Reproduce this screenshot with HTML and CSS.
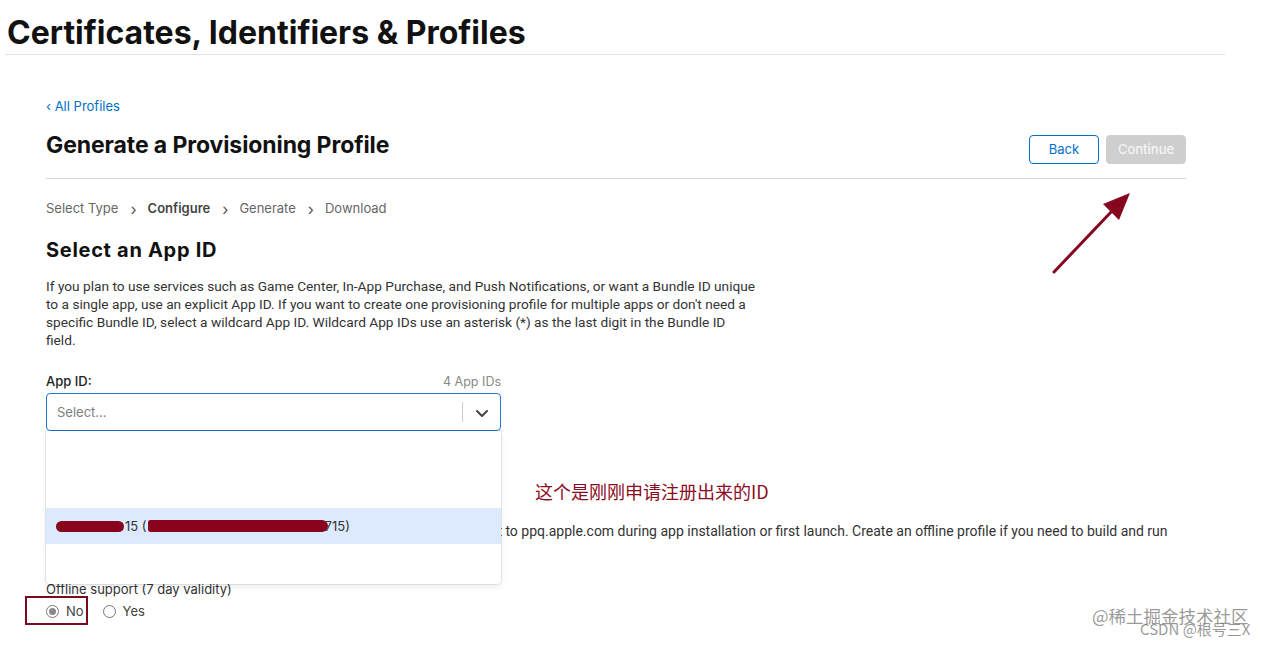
FILE: index.html
```html
<!DOCTYPE html>
<html lang="en">
<head>
<meta charset="utf-8">
<title>Generate a Provisioning Profile</title>
<link rel="stylesheet" href="styles.css">
</head>
<body>
<header class="site-header">
  <div class="site-title">Certificates, Identifiers &amp; Profiles</div>
</header>

<main class="main">
  <a class="back-link" href="#">&lsaquo; All Profiles</a>
  <div class="page-head">
    <h1 class="page-title">Generate a Provisioning Profile</h1>
    <div class="actions">
      <button class="btn btn-back">Back</button>
      <button class="btn btn-continue">Continue</button>
    </div>
  </div>

  <nav class="steps">
    <span class="step">Select Type</span>
    <span class="sep">&rsaquo;</span>
    <span class="step current">Configure</span>
    <span class="sep">&rsaquo;</span>
    <span class="step">Generate</span>
    <span class="sep">&rsaquo;</span>
    <span class="step">Download</span>
  </nav>

  <h2 class="section-title">Select an App ID</h2>
  <p class="desc">If you plan to use services such as Game Center, In-App Purchase, and Push Notifications, or want a Bundle ID unique to a single app, use an explicit App ID. If you want to create one provisioning profile for multiple apps or don't need a specific Bundle ID, select a wildcard App ID. Wildcard App IDs use an asterisk (*) as the last digit in the Bundle ID field.</p>

  <div class="field">
    <div class="field-head">
      <span class="field-label">App ID:</span>
      <span class="field-count">4 App IDs</span>
    </div>
    <div class="select">
      <span class="select-placeholder">Select...</span>
      <span class="select-divider"></span>
      <span class="select-arrow">
        <svg width="14" height="9" viewBox="0 0 14 9"><path d="M2 2 L7 7 L12 2" fill="none" stroke="#444" stroke-width="2" stroke-linecap="round" stroke-linejoin="round"/></svg>
      </span>
    </div>
    <div class="menu">
      <div class="menu-option active"><span class="redact r1"></span>15 (<span class="redact r2"></span>715)</div>
    </div>
  </div>

  <section class="offline">
    <h3 class="offline-title">Offline Support</h3>
    <p class="offline-text">If offline support is not selected, provisioning profiles will need to connect to ppq.apple.com during app installation or first launch. Create an offline profile if you need to build and run your app on devices without internet access.</p>
    <div class="offline-label">Offline support (7 day validity)</div>
    <div class="radios">
      <label class="radio marked"><span class="dot checked"></span>No</label>
      <label class="radio"><span class="dot"></span>Yes</label>
    </div>
  </section>
</main>

<div class="note">这个是刚刚申请注册出来的ID</div>
<svg class="arrow" width="90" height="90" viewBox="0 0 90 90">
  <path d="M6 84 L64 23" stroke="#86061f" stroke-width="3" stroke-linecap="round"/>
  <path d="M82 5 L55 16 L71 32 Z" fill="#86061f"/>
</svg>

<div class="watermark">
  <span class="wm1">@稀土掘金技术社区</span>
  <span class="wm2">CSDN @根号三X</span>
</div>
</body>
</html>
```
FILE: styles.css
```css
*, *::before, *::after { box-sizing: border-box; }

body {
  margin: 0;
  background: #fff;
  font-family: Inter, "Noto Sans CJK SC", sans-serif;
  color: #333;
  position: relative;
  width: 1271px;
  height: 647px;
  overflow: hidden;
}

.site-header {
  margin-left: 5px;
  width: 1220px;
  height: 55px;
  border-bottom: 1px solid #e2e2e2;
  padding: 13px 0 0 2px;
}

.site-title {
  font-size: 32px;
  font-weight: 700;
  letter-spacing: 0;
  color: #111;
  line-height: 40px;
}

.main {
  margin-left: 46px;
  width: 1140px;
  padding-top: 43px;
  position: relative;
}

.back-link {
  display: block;
  font-size: 13px;
  color: #0070c9;
  text-decoration: none;
  line-height: 16px;
}

.page-head {
  display: flex;
  justify-content: space-between;
  align-items: flex-start;
  border-bottom: 1px solid #d6d6d6;
  padding-top: 13px;
  height: 65px;
}

.page-title {
  margin: 3px 0 0;
  font-size: 23px;
  font-weight: 700;
  letter-spacing: -0.1px;
  color: #111;
  line-height: 30px;
}

.actions {
  display: flex;
  gap: 7px;
  margin-top: 8px;
}

.btn {
  height: 29px;
  border-radius: 4px;
  font-family: Inter, sans-serif;
  font-size: 13px;
  padding: 0 0 2px;
}

.btn-back {
  width: 70px;
  background: #fff;
  border: 1px solid #0070c9;
  color: #0070c9;
}

.btn-continue {
  width: 80px;
  background: #cfcfcf;
  border: 1px solid #cfcfcf;
  color: #f4f4f4;
  font-weight: 500;
}

.steps {
  display: flex;
  align-items: center;
  font-size: 13px;
  color: #666;
  margin-top: 19px;
  line-height: 16px;
}

.step.current { font-weight: 600; color: #444; }

.sep {
  font-size: 16px;
  color: #555;
  margin: 3px 11px 0 12px;
}

.section-title {
  margin: 19px 0 0;
  font-size: 20px;
  font-weight: 700;
  letter-spacing: 0.7px;
  color: #111;
  line-height: 28px;
}

.desc {
  margin: 13px 0 0;
  width: 711px;
  font-family: Roboto, sans-serif;
  font-size: 13.7px;
  line-height: 18px;
  color: #333;
}

.field {
  width: 455px;
  margin-top: 20px;
  position: relative;
}

.field-head {
  display: flex;
  justify-content: space-between;
  align-items: flex-end;
  height: 20px;
}

.field-label {
  font-size: 13px;
  font-weight: 500;
  color: #222;
  line-height: 16px;
}

.field-count {
  font-size: 12.5px;
  color: #888;
  line-height: 14px;
}

.select {
  margin-top: 4px;
  height: 38px;
  border: 1px solid #1f78d1;
  border-radius: 4px;
  display: flex;
  align-items: center;
  padding-left: 10px;
}

.select-placeholder {
  flex: 1;
  font-size: 13px;
  color: #808080;
}

.select-divider {
  width: 1px;
  height: 20px;
  background: #ccc;
}

.select-arrow {
  width: 37px;
  display: flex;
  justify-content: center;
  padding-top: 2px;
}

.menu {
  position: absolute;
  top: 62px;
  left: 0;
  width: 455px;
  height: 153px;
  background: #fff;
  border-radius: 0 0 4px 4px;
  box-shadow: 0 0 0 1px rgba(0,0,0,0.08), 0 3px 6px rgba(0,0,0,0.08);
  padding-top: 77px;
  z-index: 2;
}

.menu-option {
  height: 36px;
  background: #dde9fc;
  font-size: 13px;
  color: #333;
  display: flex;
  align-items: center;
  padding-left: 10px;
  white-space: nowrap;
}

.redact {
  display: inline-block;
  height: 11px;
  background: #88041c;
  border-radius: 6px;
}

.r1 { width: 68px; margin-right: 1px; }
.r2 { width: 180px; margin-left: 1px; margin-right: -3px; height: 12px; border-radius: 4px 10px 10px 4px; }

.offline {
  margin-top: 61px;
}

.offline-title {
  margin: 0;
  font-size: 17px;
  line-height: 22px;
  font-weight: 700;
  color: #111;
}

.offline-text {
  margin: 8px 0 0;
  width: 1140px;
  font-family: Roboto, sans-serif;
  font-size: 14px;
  line-height: 18px;
  color: #333;
}

.offline-label {
  margin-top: 22px;
  font-size: 13px;
  color: #333;
  line-height: 18px;
}

.radios {
  display: flex;
  gap: 19px;
  margin-top: 4px;
}

.radio {
  display: flex;
  align-items: center;
  gap: 7px;
  font-size: 13px;
  color: #444;
  line-height: 18px;
  position: relative;
}

.dot {
  width: 13px;
  height: 13px;
  border-radius: 50%;
  border: 1px solid #777;
  background: #fff;
  display: flex;
  align-items: center;
  justify-content: center;
}

.dot.checked::after {
  content: "";
  width: 7px;
  height: 7px;
  border-radius: 50%;
  background: #8a8a8a;
}

.radio.marked::before {
  content: "";
  position: absolute;
  left: -21px;
  top: -6px;
  width: 63px;
  height: 29px;
  border: 2px solid #7a0a1e;
}

.note {
  position: absolute;
  left: 535px;
  top: 479px;
  font-family: "Noto Sans CJK SC", sans-serif;
  font-size: 18px;
  color: #8b0b22;
  line-height: 24px;
}

.arrow {
  position: absolute;
  left: 1048px;
  top: 188px;
}

.watermark {
  position: absolute;
  left: 1092px;
  top: 605px;
  color: rgba(120,120,120,0.75);
  font-family: "Noto Sans CJK SC", sans-serif;
}

.wm1 {
  display: block;
  font-size: 17.5px;
  line-height: 22px;
}

.wm2 {
  position: absolute;
  left: 48px;
  top: 15px;
  font-size: 15px;
  white-space: nowrap;
  line-height: 18px;
}
```
